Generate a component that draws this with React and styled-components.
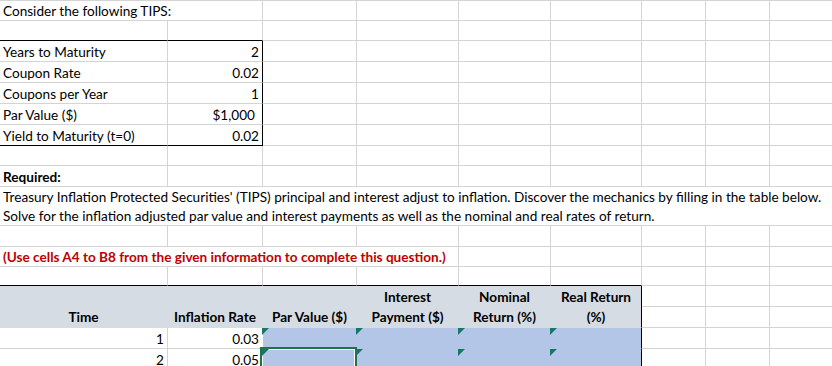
import React from "react";
import styled, { createGlobalStyle } from "styled-components";

const GRID = "#d4d4d4";
const INK = "#000000";
const HEAD_FILL = "#d6dce4";
const INPUT_FILL = "#b4c6e7";

const GlobalStyle = createGlobalStyle`
  html, body {
    margin: 0;
    padding: 0;
    background: #ffffff;
    overflow: hidden;
  }
  body {
    font-family: Lato, "Liberation Sans", sans-serif;
    font-size: 13.6px;
    color: ${INK};
  }
`;

const Sheet = styled.div`
  display: grid;
  grid-template-columns: 168px 95px 94px 102px 92px 91px 64px 64px 64px;
  grid-template-rows:
    20px 20px 21px 21px 21px 21px 21px 20px 21px 20px 19px 21px 20px 19px
    21px 21px 21px 21px;
  border-top: 1px solid ${GRID};
  width: max-content;
`;

const Cell = styled.div`
  position: relative;
  box-sizing: border-box;
  grid-column: span ${p => p.$span || 1};
  grid-row: span ${p => p.$rows || 1};
  display: flex;
  align-items: flex-end;
  justify-content: ${p =>
    p.$align === "right" ? "flex-end" : p.$align === "center" ? "center" : "flex-start"};
  text-align: ${p => p.$align || "left"};
  padding: 0 ${p => (p.$pr != null ? p.$pr : 3)}px 0 3px;
  line-height: 18px;
  white-space: nowrap;
  font-weight: ${p => (p.$bold ? 700 : 400)};
  color: ${p => p.$color || INK};
  background: ${p => p.$fill || "transparent"};
  border-right: 1px solid ${p => p.$rb || (p.$fill ? "transparent" : GRID)};
  border-bottom: 1px solid ${p => p.$bb || (p.$fill ? "transparent" : GRID)};

  ${p =>
    p.$flag &&
    `
    &::before {
      content: "";
      position: absolute;
      top: 0;
      left: -1px;
      border-top: 7px solid #1b7567;
      border-right: 7px solid transparent;
      z-index: 2;
    }
  `}

  ${p =>
    p.$selected &&
    `
    &::after {
      content: "";
      position: absolute;
      top: -2px;
      left: -3px;
      right: -1px;
      bottom: -2px;
      border: 2px solid #217346;
      box-shadow: inset 0 0 0 1px #ffffff;
      z-index: 1;
    }
  `}
`;

const HeadCell = styled(Cell)`
  white-space: normal;
  line-height: 20px;
  padding: 0 2px 0;
  background: ${HEAD_FILL};
  border-bottom-color: transparent;
`;

const blank = (n, key) =>
  Array.from({ length: n }, (_, i) => <Cell key={`${key}-${i}`} />);

const givens = [
  ["Years to Maturity", "2"],
  ["Coupon Rate", "0.02"],
  ["Coupons per Year", "1"],
  ["Par Value ($)", "$1,000", 7],
  ["Yield to Maturity (t=0)", "0.02"]
];

const headers = [
  "Time",
  "Inflation Rate",
  "Par Value ($)",
  "Interest Payment ($)",
  "Nominal Return (%)",
  "Real Return (%)"
];

const schedule = [
  ["1", "0.03"],
  ["2", "0.05"]
];

export default function App() {
  return (
    <>
      <GlobalStyle />
      <Sheet>
        <Cell $span={2}>Consider the following TIPS:</Cell>
        {blank(7, "r1")}

        <Cell $bb={INK} />
        <Cell $bb={INK} />
        {blank(7, "r2")}

        {givens.map(([label, value, pr], i) => {
          const last = i === givens.length - 1;
          return (
            <React.Fragment key={label}>
              <Cell $bb={last ? INK : undefined}>{label}</Cell>
              <Cell $align="right" $pr={pr} $rb={INK} $bb={last ? INK : undefined}>
                {value}
              </Cell>
              {blank(7, `g${i}`)}
            </React.Fragment>
          );
        })}

        {blank(9, "r8")}

        <Cell $bold>Required:</Cell>
        {blank(8, "r9")}

        <Cell $span={9} $bb="transparent">
          Treasury Inflation Protected Securities' (TIPS) principal and interest adjust
          to inflation. Discover the mechanics by filling in the table below.
        </Cell>
        <Cell $span={9}>
          Solve for the inflation adjusted par value and interest payments as well as the
          nominal and real rates of return.
        </Cell>

        {blank(9, "r12")}

        <Cell $span={4} $bold $color="#c00000">
          (Use cells A4 to B8 from the given information to complete this question.)
        </Cell>
        {blank(5, "r13")}

        {Array.from({ length: 6 }, (_, i) => (
          <Cell key={`r14-${i}`} $bb={INK} />
        ))}
        {blank(3, "r14")}

        {headers.map((h, i) => (
          <HeadCell
            key={h}
            $rows={2}
            $align="center"
            $bold
            $rb={i === headers.length - 1 ? INK : "transparent"}
          >
            {h}
          </HeadCell>
        ))}
        {blank(3, "r15")}
        {blank(3, "r16")}

        {schedule.map(([t, rate], r) => (
          <React.Fragment key={t}>
            <Cell $align="right">{t}</Cell>
            <Cell $align="right" $rb="transparent">
              {rate}
            </Cell>
            {[0, 1, 2, 3].map(c => (
              <Cell
                key={c}
                $fill={INPUT_FILL}
                $flag
                $selected={r === 1 && c === 0}
                $rb={c === 3 ? INK : undefined}
              />
            ))}
            {blank(3, `d${r}`)}
          </React.Fragment>
        ))}
      </Sheet>
    </>
  );
}
